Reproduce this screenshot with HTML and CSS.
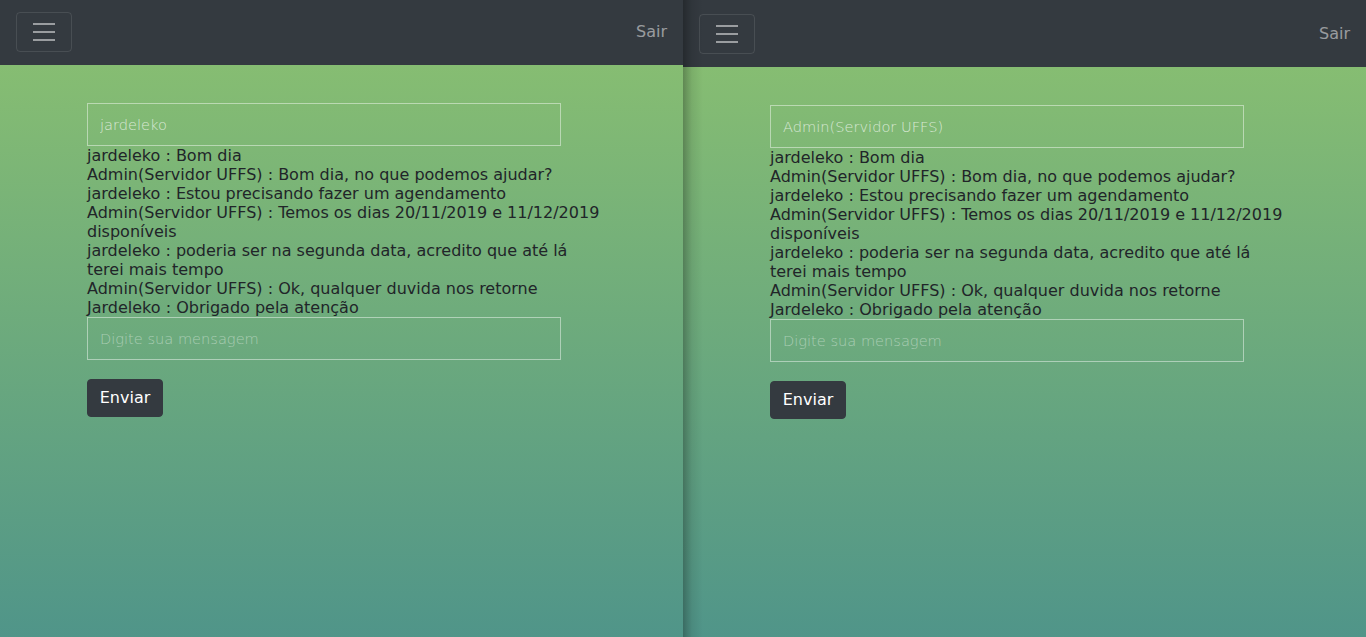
FILE: index.html
```html
<!DOCTYPE html>
<html lang="pt-BR">
<head>
<meta charset="utf-8">
<title>Chat</title>
<link rel="stylesheet" href="styles.css">
</head>
<body>
  <div class="pane">
    <nav class="navbar">
      <button class="toggler" type="button" aria-label="Menu">
        <svg class="toggler-icon" viewBox="0 0 30 30" width="30" height="30"><path d="M4 7h22M4 15h22M4 23h22" stroke="rgba(255,255,255,0.5)" stroke-width="2" stroke-linecap="butt" fill="none"/></svg>
      </button>
      <a class="nav-link" href="#">Sair</a>
    </nav>
    <main class="content">
      <div class="chat">
        <input class="field" type="text" value="jardeleko" readonly>
        <div class="messages">
          <div>jardeleko : Bom dia</div>
          <div>Admin(Servidor UFFS) : Bom dia, no que podemos ajudar?</div>
          <div>jardeleko : Estou precisando fazer um agendamento</div>
          <div>Admin(Servidor UFFS) : Temos os dias 20/11/2019 e 11/12/2019 disponíveis</div>
          <div>jardeleko : poderia ser na segunda data, acredito que até lá terei mais tempo</div>
          <div>Admin(Servidor UFFS) : Ok, qualquer duvida nos retorne</div>
          <div>Jardeleko : Obrigado pela atenção</div>
        </div>
        <input class="field" type="text" placeholder="Digite sua mensagem">
        <button class="btn" type="button">Enviar</button>
      </div>
    </main>
  </div>
  <div class="pane pane-right">
    <nav class="navbar">
      <button class="toggler" type="button" aria-label="Menu">
        <svg class="toggler-icon" viewBox="0 0 30 30" width="30" height="30"><path d="M4 7h22M4 15h22M4 23h22" stroke="rgba(255,255,255,0.5)" stroke-width="2" stroke-linecap="butt" fill="none"/></svg>
      </button>
      <a class="nav-link" href="#">Sair</a>
    </nav>
    <main class="content">
      <div class="chat">
        <input class="field" type="text" value="Admin(Servidor UFFS)" readonly>
        <div class="messages">
          <div>jardeleko : Bom dia</div>
          <div>Admin(Servidor UFFS) : Bom dia, no que podemos ajudar?</div>
          <div>jardeleko : Estou precisando fazer um agendamento</div>
          <div>Admin(Servidor UFFS) : Temos os dias 20/11/2019 e 11/12/2019 disponíveis</div>
          <div>jardeleko : poderia ser na segunda data, acredito que até lá terei mais tempo</div>
          <div>Admin(Servidor UFFS) : Ok, qualquer duvida nos retorne</div>
          <div>Jardeleko : Obrigado pela atenção</div>
        </div>
        <input class="field" type="text" placeholder="Digite sua mensagem">
        <button class="btn" type="button">Enviar</button>
      </div>
    </main>
  </div>
</body>
</html>
```
FILE: styles.css
```css
* { box-sizing: border-box; }
html, body { margin: 0; padding: 0; height: 100%; }
body {
  display: flex;
  font-family: "DejaVu Sans", sans-serif;
  font-size: 16px;
  color: #212529;
  overflow: hidden;
  background: #343a40;
}
.pane {
  width: 683px;
  height: 637px;
  display: flex;
  flex-direction: column;
  position: relative;
}
.pane-right { flex: 1; }
.pane-right::after {
  content: "";
  position: absolute;
  top: 0;
  bottom: 0;
  left: 0;
  width: 20px;
  background: linear-gradient(to right, rgba(0,0,0,0.28), rgba(0,0,0,0.08) 45%, rgba(0,0,0,0));
  pointer-events: none;
}
.navbar {
  background: #343a40;
  height: 65px;
  padding: 12px 16px 13px 16px;
  display: flex;
  align-items: center;
  justify-content: space-between;
}
.pane-right .navbar {
  height: 67px;
  padding-top: 14px;
}
.toggler {
  width: 56px;
  height: 40px;
  padding: 4px 12px;
  border: 1px solid rgba(255,255,255,0.1);
  border-radius: 4px;
  background: transparent;
  display: flex;
  align-items: center;
  justify-content: center;
}
.toggler-icon { display: block; }
.nav-link {
  color: rgba(255,255,255,0.5);
  text-decoration: none;
  font-size: 16px;
  line-height: 24px;
}
.content {
  flex: 1;
  background: linear-gradient(to bottom, #86bd72, #509589);
  padding: 38px 0 0 87px;
}
.chat {
  width: 516px;
  display: flex;
  flex-direction: column;
  align-items: flex-start;
}
.field {
  width: 474px;
  height: 43px;
  border: 1px solid rgba(255,255,255,0.45);
  background: transparent;
  padding: 0 12px;
  font-family: "DejaVu Sans", sans-serif;
  font-size: 14.6px;
  font-weight: 200;
  color: rgba(255,255,255,0.7);
  outline: none;
  border-radius: 0;
}
.field::placeholder {
  color: rgba(255,255,255,0.42);
}
.messages {
  font-size: 16px;
  line-height: 19px;
  width: 100%;
}
.btn {
  margin-top: 19px;
  width: 76px;
  height: 38px;
  padding: 6px 0;
  background: #343a40;
  color: #fff;
  border: 1px solid #343a40;
  border-radius: 4px;
  font-family: "DejaVu Sans", sans-serif;
  font-size: 16px;
  line-height: 24px;
  text-align: center;
}
```
